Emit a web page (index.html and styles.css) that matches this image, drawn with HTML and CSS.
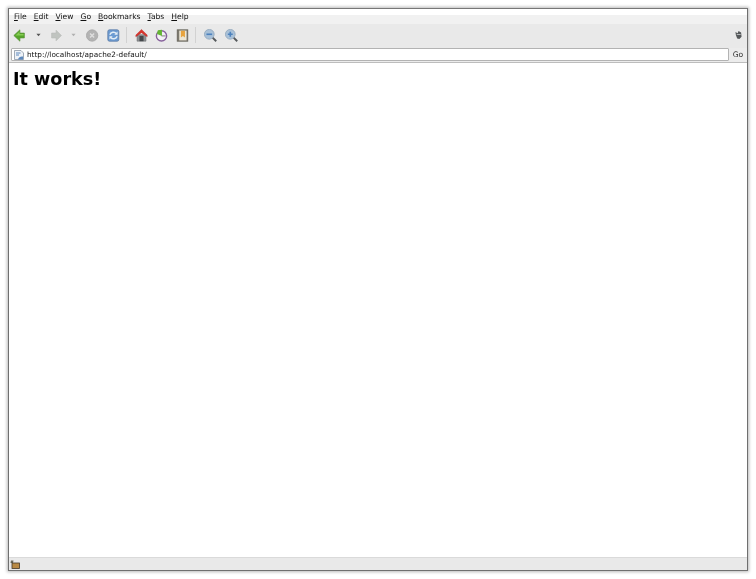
FILE: index.html
```html
<!DOCTYPE html>
<html lang="en">
<head>
<meta charset="utf-8">
<title>It works!</title>
<link rel="stylesheet" href="styles.css">
</head>
<body>
<div class="window">
  <nav class="menubar">
    <span class="menu"><u>F</u>ile</span>
    <span class="menu"><u>E</u>dit</span>
    <span class="menu"><u>V</u>iew</span>
    <span class="menu"><u>G</u>o</span>
    <span class="menu"><u>B</u>ookmarks</span>
    <span class="menu"><u>T</u>abs</span>
    <span class="menu"><u>H</u>elp</span>
  </nav>
  <div class="toolbar">
    <svg class="icon" viewBox="0 0 16 16"><path d="M1 8 8.500 1V5H14V11H8.500V15Z" fill="#55a52a" stroke="#5a8f3a" stroke-width=".8" stroke-linejoin="round"/><path d="M3 8 8 3.500V6H13V8Z" fill="#86cc52"/></svg>
    <svg class="arrow back-arrow" viewBox="0 0 6 4"><path d="M.5.500H5.500L3 3.500Z" fill="#555"/></svg>
    <svg class="icon forward" viewBox="0 0 16 16"><path d="M14 8 7.500 1.500V5H2V11H7.500V14.500Z" fill="#c0c4c0" stroke="#b8bbb8" stroke-width=".8" stroke-linejoin="round"/></svg>
    <svg class="arrow forward-arrow" viewBox="0 0 6 4"><path d="M.5.500H5.500L3 3.500Z" fill="#b0b0b0"/></svg>
    <svg class="icon stop" viewBox="0 0 16 16"><circle cx="7.500" cy="8" r="7" fill="#b3b3b3" stroke="#a8a8a8"/><path d="M5 5.500 10 10.500M10 5.500 5 10.500" stroke="#dedede" stroke-width="1.800"/></svg>
    <svg class="icon reload" viewBox="0 0 16 16"><rect x="1" y="1" width="13.500" height="14" rx="2" fill="#6c9bd2" stroke="#5c7da8"/><path d="M3.500 7C4.500 3.500 9.500 3 11.500 5.500M12.500 9C11.500 12.500 6.500 13 4.500 10.500" fill="none" stroke="#e3edf6" stroke-width="1.700"/><path d="M13 3V7H9ZM3 13V9H7Z" fill="#e3edf6"/></svg>
    <span class="separator sep-nav"></span>
    <svg class="icon home" viewBox="0 0 16 16"><path d="M2.500 7V15H13.500V7Z" fill="#8d9092" stroke="#6d7072" stroke-width=".7"/><path d="M8 .5 15 7.500V9.500L8 4.500 1 9.500V7.500Z" fill="#d9352d" stroke="#b52a24" stroke-width=".5"/><rect x="5.500" y="8.500" width="5" height="6.500" fill="#44484b"/></svg>
    <svg class="icon history" viewBox="0 0 16 16"><circle cx="8" cy="8.500" r="6.300" fill="#f3f0f5" stroke="#86609b" stroke-width="1.700"/><path d="M8 8.500H13" stroke="#555" stroke-width=".9" fill="none"/><path d="M8.500 8.500 2.500 6 3.500 1.500 8.500 1Z" fill="#63b532"/></svg>
    <svg class="icon bookmarks" viewBox="0 0 16 16"><rect x="1.500" y="1" width="13" height="14" fill="#7d7a6f" stroke="#66635a"/><rect x="4" y="2" width="9" height="12" fill="#ece6d6"/><path d="M6 2H11V10.500L8.500 8.500 6 10.500Z" fill="#e8a33d"/></svg>
    <span class="separator sep-zoom"></span>
    <svg class="icon zoom-out" viewBox="0 0 16 16"><path d="M10 10 15 15" stroke="#55595c" stroke-width="2.400"/><circle cx="6.500" cy="6.500" r="6" fill="#a9c1d8" stroke="#93a8bc"/><rect x="3" y="5.500" width="7" height="2" fill="#4d82bd"/></svg>
    <svg class="icon zoom-in" viewBox="0 0 16 16"><path d="M10 10 15 15" stroke="#55595c" stroke-width="2.400"/><circle cx="6.500" cy="6.500" r="6" fill="#a9c1d8" stroke="#93a8bc"/><path d="M3.500 5.500H5.500V3.500H7.500V5.500H9.500V7.500H7.500V9.500H5.500V7.500H3.500Z" fill="#4d82bd"/></svg>
    <svg class="throbber" viewBox="0 0 8 10"><path d="M.5 1.500 3 3 4 .5 7 2 7.500 7 5 9.500 2.500 9 1 5Z" fill="#55585a"/><path d="M2 4H6.500V5H2Z" fill="#c4c6c8"/></svg>
  </div>
  <div class="addressbar">
    <div class="url-field">
      <svg class="favicon" viewBox="0 0 10 10"><path d="M.5.500H7L9.500 3V9.500H.5Z" fill="#eef2f7" stroke="#7d8a9a" stroke-width=".7"/><path d="M2 3H6.500M2 5H5" stroke="#5c88bd"/><path d="M4 9.500C4.500 7 7 6 9 6.500V9.500Z" fill="#5c88bd"/></svg>
      <span class="url">http://localhost/apache2-default/</span>
    </div>
    <span class="go">Go</span>
  </div>
  <main class="content">
    <h1 class="title">It works!</h1>
  </main>
  <footer class="statusbar">
    <svg class="lock" viewBox="0 0 10 9"><path d="M.5 3H3L3.500 .5H1Z" fill="#6b6b5f"/><rect x="2" y="3" width="7.500" height="5.500" fill="#b98a45" stroke="#44392a" stroke-width=".8"/></svg>
  </footer>
</div>
</body>
</html>
```
FILE: styles.css
```css
html, body {
  margin: 0;
  height: 100%;
  background: #fff;
}

body {
  padding: 8px;
  box-sizing: border-box;
  font-family: "DejaVu Sans", sans-serif;
  color: #111;
}

.window {
  width: 740px;
  height: 563px;
  box-sizing: border-box;
  display: flex;
  flex-direction: column;
  background: #fff;
  border: 1px solid #6f6f6f;
  border-top-color: #777;
  box-shadow: 0 0 3px 1px rgba(0, 0, 0, .28);
  filter: blur(.45px);
}

.menubar {
  height: 14px;
  flex: none;
  margin-top: 1px;
  padding-left: 5px;
  display: flex;
  align-items: center;
  background: linear-gradient(#fff 0 5px, #f1f1f1 5px);
  font-size: 7.600px;
  line-height: 14px;
}

.menu {
  margin-right: 7px;
  white-space: nowrap;
}

.toolbar {
  height: 24px;
  flex: none;
  display: flex;
  align-items: center;
  box-sizing: border-box;
  padding: 0 0 2px 4px;
  background: #e9e9e9;
}

.icon {
  width: 13px;
  height: 13px;
  flex: none;
}

.arrow {
  width: 5px;
  height: 4px;
  flex: none;
}

.back-arrow { margin-left: 10px; }
.forward { margin-left: 9px; }
.forward-arrow { margin-left: 8px; }
.stop { margin-left: 10px; }
.reload { margin-left: 8px; }
.home { margin-left: 8px; }
.history { margin-left: 7px; }
.bookmarks { margin-left: 8px; }
.zoom-out { margin-left: 8px; }
.zoom-in { margin-left: 8px; }

.separator {
  width: 1px;
  height: 16px;
  flex: none;
  background: #d2d2d2;
}

.sep-nav { margin-left: 6px; }
.sep-zoom { margin-left: 6px; }

.throbber {
  width: 7px;
  height: 10px;
  margin-left: auto;
  margin-right: 5px;
  flex: none;
}

.addressbar {
  height: 15px;
  flex: none;
  display: flex;
  align-items: center;
  padding: 0 0 1px 2px;
  box-sizing: border-box;
  background: #ececec;
  border-bottom: 1px solid #bdbdbd;
}

.url-field {
  flex: 1;
  height: 13px;
  box-sizing: border-box;
  display: flex;
  align-items: center;
  gap: 3px;
  padding-left: 2px;
  background: #fff;
  border: 1px solid #b3b3b3;
  border-radius: 1px;
}

.favicon {
  width: 10px;
  height: 10px;
  flex: none;
}

.url {
  font-size: 7.300px;
  line-height: 12px;
  padding-top: 1px;
  white-space: nowrap;
}

.go {
  width: 18px;
  text-align: center;
  font-size: 7.600px;
  color: #333;
}

.content {
  flex: 1;
  padding: 6px 4px;
  background: #fff;
}

.title {
  margin: 0;
  font-size: 17.600px;
  line-height: 20px;
  font-weight: 700;
  color: #000;
}

.statusbar {
  height: 13px;
  flex: none;
  box-sizing: border-box;
  display: flex;
  align-items: center;
  padding-left: 1px;
  background: #e9e9e9;
  border-top: 1px solid #dadada;
}

.lock {
  width: 10px;
  height: 9px;
}
```
